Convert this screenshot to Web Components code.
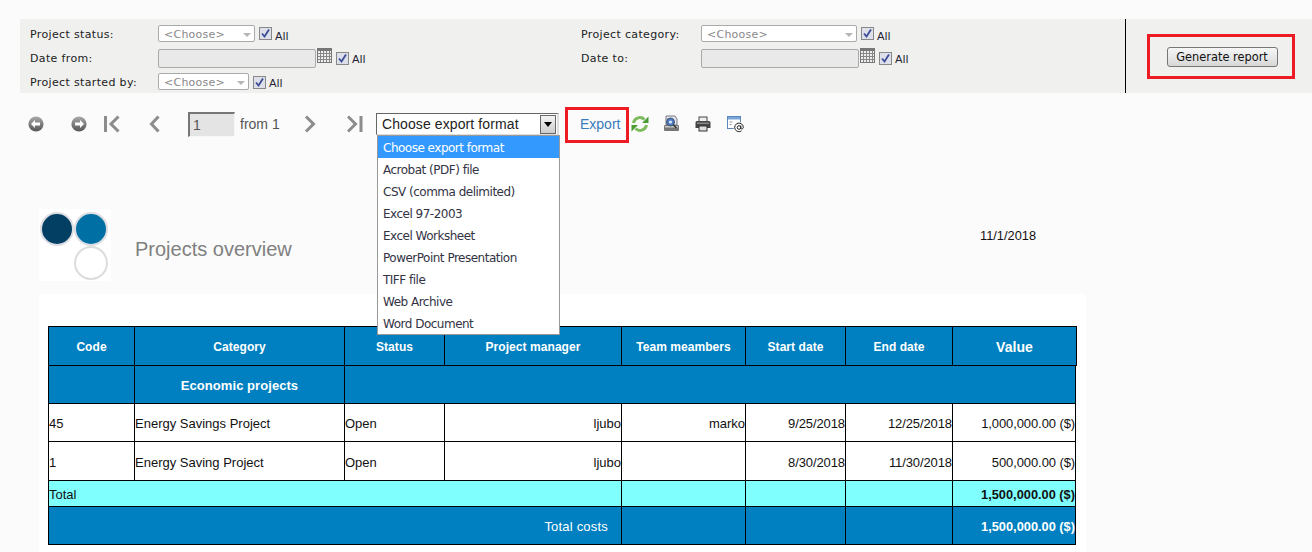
<!DOCTYPE html>
<html><head><meta charset="utf-8"><style>
html,body{margin:0;padding:0;background:#fbfbfb;overflow:hidden;height:552px}
body{font-family:"DejaVu Sans",sans-serif}
</style></head><body>
<x-filter-panel>
  <x-lbl slot="f">Project status:</x-lbl>
  <x-ctl slot="f"><x-combo w="97"></x-combo><x-all></x-all></x-ctl>
  <x-lbl slot="f">Project category:</x-lbl>
  <x-ctl slot="f"><x-combo w="156"></x-combo><x-all></x-all></x-ctl>
  <x-lbl slot="f">Date from:</x-lbl>
  <x-ctl slot="f"><x-date></x-date><x-all d></x-all></x-ctl>
  <x-lbl slot="f">Date to:</x-lbl>
  <x-ctl slot="f"><x-date></x-date><x-all d></x-all></x-ctl>
  <x-lbl slot="f">Project started by:</x-lbl>
  <x-ctl slot="f"><x-combo w="91"></x-combo><x-all d></x-all></x-ctl>
</x-filter-panel>
<x-toolbar></x-toolbar>
<x-report-head></x-report-head>
<x-report-table></x-report-table>
<script>
function def(name,html,init){customElements.define(name,class extends HTMLElement{constructor(){super();const r=this.attachShadow({mode:'open'});r.innerHTML=html;if(init)init(this,r)}})}
def('x-filter-panel',`<style>
:host{display:flex;margin:19px 0 0 20px;height:74px;background:#f0f0ee}
.g{box-sizing:border-box;width:1106px;border-right:1px solid #000;padding:6px 0 0 10px;display:grid;grid-template-columns:128px 423px 120px 1fr;grid-auto-rows:24px}
.r{flex:1;display:flex;align-items:center;padding-left:21px}
.red{box-sizing:border-box;width:148px;height:45px;border:3px solid #ed1c24;display:flex;align-items:center;justify-content:center;margin-top:1px}
button{box-sizing:border-box;width:111px;height:20px;margin:0 0 0 2px;padding:1px 0 0;border:1px solid #777;border-radius:3px;background:linear-gradient(#f6f6f6,#e8e8e8 50%,#d6d6d6);font:11.4px "DejaVu Sans",sans-serif;color:#111}
</style><div class="g"><slot name="f"></slot></div><div class="r"><div class="red"><button>Generate report</button></div></div>`);
def('x-lbl',`<style>:host{display:block;font-size:11px;letter-spacing:.35px;color:#222;line-height:19px}</style><slot></slot>`);
def('x-ctl',`<style>:host{display:flex;align-items:flex-start;height:24px}</style><slot></slot>`);
def('x-combo',`<style>:host{box-sizing:border-box;display:flex;align-items:center;height:17px;background:#fff;border:1px solid #aaa;border-radius:2px;padding:1px 0 0 5px;font-size:11px;letter-spacing:.25px;color:#888;position:relative}
i{position:absolute;right:3px;top:7px;border:4px solid transparent;border-top:4px solid #b5b5b5;border-bottom:0}</style><span>&lt;Choose&gt;</span><i></i>`,(t)=>{t.style.width=t.getAttribute('w')+'px'});
def('x-date',`<style>:host{display:flex;align-items:flex-start}
b{display:block;box-sizing:border-box;width:158px;height:19px;background:#e9e9e9;border:1px solid #aaa;border-radius:2px}
svg{display:block;margin:-1px 0 0 1px}</style><b></b><svg width="15" height="15" viewBox="0 0 15 15"><rect x="0" y="0" width="15" height="2" fill="#777"/><rect x=".5" y="2.5" width="14" height="12" fill="#eee" stroke="#777"/><path d="M3.5 3v11M6.5 3v11M9.5 3v11M12.5 3v11M1 5.5h13M1 8.5h13M1 11.5h13" stroke="#888"/></svg>`);
def('x-all',`<style>:host{display:flex;align-items:flex-start;margin-left:4px;font-size:11px;color:#223;}
span{margin:5px 0 0 3px;line-height:14px}
svg{display:block;margin-top:2px}
:host([d]) svg{margin-top:3px}:host([d]) span{margin-top:4px}</style><svg width="13" height="13" viewBox="0 0 13 13"><rect x=".5" y=".5" width="12" height="12" fill="#dde0ea" stroke="#888"/><path d="M3 6.500l2.500 3L10 2.500" fill="none" stroke="#3c4c96" stroke-width="1.800"/></svg><span>All</span>`);

const chev=(d,w=16)=>`<svg width="${w}" height="18" viewBox="0 0 ${w} 18"><path d="${d}" fill="none" stroke="#8c8c8c" stroke-width="3"/></svg>`;
const circ=(d,id)=>`<svg width="16" height="16" viewBox="0 0 16 16"><defs><linearGradient id="${id}" x1="0" y1="0" x2="0" y2="1"><stop offset="0" stop-color="#aaa"/><stop offset="1" stop-color="#555"/></linearGradient></defs><circle cx="8" cy="8" r="7.600" fill="url(#${id})"/><path d="${d}" fill="#fff"/></svg>`;
def('x-toolbar',`<style>
:host{display:flex;align-items:flex-start;height:36px;margin-top:15px;position:relative;font:14px "Liberation Sans",sans-serif;color:#555}
.row{display:flex;align-items:flex-start;padding-left:28px}
svg{display:block;flex:none}
.ic{margin-top:8px}
.input{box-sizing:border-box;width:47px;height:25px;margin:4px 0 0 0;background:#e4e4e4;border-style:solid;border-width:2px 1px 1px 2px;border-color:#777 #f6f6f6 #f6f6f6 #777;padding:3px 0 0 3px;line-height:16px}
.from{margin:8px 0 0 5px;width:40px;line-height:16px}
.sel{box-sizing:border-box;width:183px;height:22px;margin:5px 0 0 0;position:relative;background:#fff;border-style:solid;border-width:1px 2px 1px 1px;border-color:#666 #ddd #ddd #666;padding:2px 0 0 5px;line-height:16px;color:#222;letter-spacing:.1px}
.btn{position:absolute;right:1px;top:1px;width:16px;height:19px;box-sizing:border-box;border:1px solid #666;background:linear-gradient(#f4f4f4,#ccc)}
.btn:after{content:"";position:absolute;left:3px;top:6px;border:4px solid transparent;border-top:5px solid #000;border-bottom:0}
.list{position:absolute;left:0;top:21px;box-sizing:border-box;width:183px;height:200px;background:#fff;border:1px solid #999;z-index:5;font:12px "DejaVu Sans",sans-serif;color:#334;letter-spacing:-.5px}
.list div{height:22px;line-height:24px;padding-left:5px}
.list .s{background:#39f;color:#fff}
.red{box-sizing:border-box;width:64px;height:36px;border:3px solid #ed1c24;margin:-1px 0 0 6px;color:#3a7cbf;padding:6px 0 0 12px;line-height:16px;flex:none}
</style><div class="row">
<span class="ic" style="width:43px">${circ('M3 8l4-4v2.500h5v3H7V12z','g1')}</span>
<span class="ic" style="width:33px">${circ('M13 8L9 4v2.500H4v3h5V12z','g2')}</span>
<span class="ic" style="width:45px;margin-top:7px">${chev('M1.500 1v16M14.500 1.500L7 9l7.500 7.500',18)}</span>
<span class="ic" style="width:39px;margin-top:7px">${chev('M9.500 1.500L2.500 9l7 7.500',12)}</span>
<div class="input">1</div><div class="from">from 1</div>
<span class="ic" style="width:43px;margin:7px 0 0 24px">${chev('M2 1.500L9.500 9 2 16.500',12)}</span>
<span class="ic" style="width:29px;margin-top:7px">${chev('M1 1.500L8.500 9 1 16.500M14 1v16',16)}</span>
<div class="sel">Choose export format<div class="btn"></div><div class="list"><div class="s">Choose export format</div><div>Acrobat (PDF) file</div><div>CSV (comma delimited)</div><div>Excel 97-2003</div><div>Excel Worksheet</div><div>PowerPoint Presentation</div><div>TIFF file</div><div>Web Archive</div><div>Word Document</div></div></div>
<div class="red">Export</div>
<span class="ic" style="width:32px;margin:7px 0 0 2px"><svg width="18" height="18" viewBox="0 0 18 18"><path d="M2.500 8A6.500 6.500 0 0 1 13.500 4.500" fill="none" stroke="#7dbb5e" stroke-width="3"/><path d="M11 8h6.500V1.500z" fill="#4d9a35"/><path d="M15.500 10A6.500 6.500 0 0 1 4.500 13.500" fill="none" stroke="#7dbb5e" stroke-width="3"/><path d="M7 10H.5v6.500z" fill="#4d9a35"/></svg></span>
<span class="ic" style="width:32px;margin-top:7px"><svg width="17" height="17" viewBox="0 0 17 17"><path d="M3 1h9l2 3v6H3z" fill="#e6e9f0" stroke="#778"/><rect x="1" y="10" width="15" height="6" rx="1" fill="#777"/><rect x="2" y="11" width="13" height="1.500" fill="#ccc"/><circle cx="7.500" cy="7" r="4" fill="#4a78c4" stroke="#456"/><circle cx="7.500" cy="7" r="1.600" fill="#d8e6f7"/><path d="M10.500 10l3 3" stroke="#333" stroke-width="1.500"/></svg></span>
<span class="ic" style="width:32px;margin-top:8px"><svg width="16" height="16" viewBox="0 0 16 16"><rect x="4" y="1" width="8" height="5" fill="#eee" stroke="#444"/><path d="M2 5h12a1.500 1.500 0 0 1 1.500 1.500V12H.5V6.500A1.500 1.500 0 0 1 2 5z" fill="#444"/><rect x="2" y="6.500" width="12" height="1.500" fill="#888"/><rect x="4" y="10" width="8" height="5" fill="#ddd" stroke="#333"/></svg></span>
<span class="ic" style="width:18px;margin-top:8px"><svg width="18" height="17" viewBox="0 0 18 17"><rect x=".5" y=".5" width="13" height="12" fill="#fff" stroke="#5b87b8"/><rect x="1" y="1" width="12" height="2.500" fill="#7aa6da"/><path d="M2.500 6h3M2.500 8.500h2" stroke="#999"/><circle cx="12" cy="11.500" r="5.500" fill="#fff"/><circle cx="12" cy="11.500" r="1.800" fill="none" stroke="#222"/><path d="M13.800 9.500v2.600c0 1.200 2.500 1.200 2.500-.8a4.300 4.300 0 1 0-1.800 3.600" fill="none" stroke="#222"/></svg></span>
</div>`);
def('x-report-head',`<style>
:host{display:flex;width:997px;margin:65px 0 0 39px;height:72px;font-family:"Liberation Sans",sans-serif}
.logo{flex:none;width:72px;height:72px;background:#fff}
svg{display:block}
h1{margin:28px 0 0 24px;flex:1;font-weight:400;font-size:20px;line-height:24px;color:#808080}
.d{margin-top:20px;font-size:12.800px;line-height:14px;color:#111}
</style><div class="logo"><svg width="72" height="72"><circle cx="18" cy="20" r="16" fill="#023f63" stroke="#dcdde2" stroke-width="2"/><circle cx="52" cy="20" r="16" fill="#0070a4" stroke="#dcdde2" stroke-width="2"/><circle cx="52" cy="54" r="16" fill="#fff" stroke="#dcdcdc" stroke-width="2"/></svg></div><h1>Projects overview</h1><div class="d">11/1/2018</div>`);
const C=(t,c='',s='')=>`<div class="${c}"${s?` style="${s}"`:''}>${t}</div>`;
def('x-report-table',`<style>
:host{display:block;box-sizing:border-box;width:1047px;margin:13px 0 0 39px;padding:32px 0 8px 9px;background:#fff;font:12px "Liberation Sans",sans-serif;color:#111}
.t{display:grid;width:1028px;box-sizing:border-box;padding:1px;gap:1px;background:#000;grid-template-columns:85px 209px 99px 176px 123px 99px 106px 122px;grid-template-rows:38px 37px 37px 38px 25px 37px}
.t>div{box-sizing:border-box;padding-top:2px;display:flex;align-items:center;background:#fff;white-space:nowrap;min-width:0}
.t>.b{background:#0080c0;color:#fff}
.t>.h{justify-content:center;font-weight:700;letter-spacing:.06px}
.t>.c{background:#80ffff}
.t>.R{justify-content:flex-end}
.t>.o{margin-right:-1px;box-shadow:1px 0 #000,1px 1px #000,1px -1px #000;font-size:14px}
.t>.w{font-weight:700;font-size:12.800px}
.n{font-size:13px}
.t>.m{letter-spacing:-.1px}
</style><div class="t">
${['Code','Category','Status','Project manager','Team meambers','Start date','End date'].map(x=>C(x,'b h')).join('')}${C('Value','b h o')}
${C('','b')}${C('Economic projects','b h','font-size:13px')}${C('','b','grid-column:span 6')}
${[['45','Energy Savings Project','Open','ljubo','marko','9/25/2018','12/25/2018','1,000,000.00 ($)'],['1','Energy Saving Project','Open','ljubo','','8/30/2018','11/30/2018','500,000.00 ($)']].map(r=>r.map((x,i)=>C(x,(i>2?'R ':'')+(i>4?'m ':'')+'n')).join('')).join('')}
${C('Total','c n','grid-column:span 4')}${C('','c')}${C('','c')}${C('','c')}${C('1,500,000.00 ($)','c R w')}
${C('Total costs','b R n','grid-column:span 4;padding-right:13px;letter-spacing:.2px')}${C('','b')}${C('','b')}${C('','b')}${C('1,500,000.00 ($)','b R w')}
</div>`);
</script>
</body></html>
